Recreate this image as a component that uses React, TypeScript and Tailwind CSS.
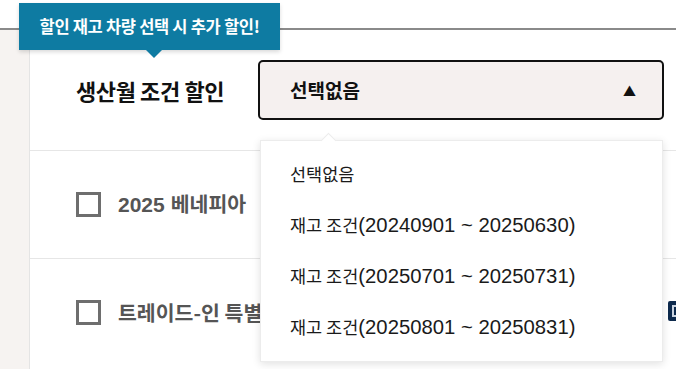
import React from "react";

const font = { fontFamily: '"Noto Sans CJK KR", "Noto Sans", sans-serif' };
const latin = { fontFamily: '"Liberation Sans", "Noto Sans CJK KR", sans-serif' };

const items: [string, string][] = [
  ["선택없음", ""],
  ["재고 조건", "(20240901 ~ 20250630)"],
  ["재고 조건", "(20250701 ~ 20250731)"],
  ["재고 조건", "(20250801 ~ 20250831)"],
];

export default function App() {
  return (
    <div
      className="relative w-[676px] h-[369px] overflow-hidden bg-white flex flex-col"
      style={font}
    >
      <div className="h-[28px] shrink-0 bg-white" />
      <div className="h-[2px] shrink-0 bg-[#8a8a8a]" />
      <div className="flex flex-1">
        <div className="w-[30px] shrink-0 bg-[#f6f3f1] border-r border-[#e4e4e4]" />
        <div className="flex-1 flex flex-col">
          <div className="h-[121px] shrink-0 flex items-center pl-[46px] border-b border-[#e6e6e6]">
            <span className="text-[22px] font-bold text-[#111] tracking-[-0.4px] w-[182px]">
              생산월 조건 할인
            </span>
            <div className="w-[406px] h-[60px] rounded-[5px] border-2 border-[#111] bg-[#f5f0ef] flex items-center justify-between pl-[30px] pr-[26px]">
              <span className="text-[19px] font-bold text-[#111]">선택없음</span>
              <span className="text-[13px] text-[#111] leading-none">▲</span>
            </div>
          </div>
          <div className="h-[108px] shrink-0 flex items-center pl-[46px] border-b border-[#e6e6e6]">
            <div className="w-[25px] h-[25px] border-[3px] border-[#6e6e6e]" />
            <div className="ml-[17px] whitespace-nowrap flex items-baseline gap-[6px] font-bold text-[#555]">
              <span className="text-[21px]" style={latin}>2025</span>
              <span className="text-[20.5px]">베네피아</span>
            </div>
          </div>
          <div className="h-[116px] shrink-0 flex items-center pl-[46px] pb-[10px] relative">
            <div className="w-[25px] h-[25px] border-[3px] border-[#6e6e6e]" />
            <div className="ml-[17px] whitespace-nowrap text-[20.5px] font-bold text-[#555]">
              트레이드-인 특별
            </div>
            <div className="absolute left-[638px] top-[42px] w-[20px] h-[20px] bg-[#0d2a4d] rounded-[2px] flex items-center justify-center">
              <div className="w-[12px] h-[12px] bg-[#0d2a4d] border-2 border-[#c9d3e0]" />
            </div>
          </div>
        </div>
      </div>

      {/* tooltip */}
      <div className="absolute left-[19px] top-[3px] w-[261px] h-[47px] bg-[#0e7ba2] shadow-[0_2px_4px_rgba(0,0,0,0.15)] flex items-center justify-center">
        <span className="text-[16.5px] font-bold text-white tracking-[-0.3px]">
          할인 재고 차량 선택 시 추가 할인!
        </span>
        <div className="absolute left-[127px] -bottom-[8px] w-0 h-0 border-l-[8px] border-r-[8px] border-t-[8px] border-l-transparent border-r-transparent border-t-[#0e7ba2]" />
      </div>

      {/* dropdown */}
      <div className="absolute left-[260px] top-[140px] w-[403px] h-[222px] bg-white border border-[#ececec] shadow-[0_2px_8px_rgba(0,0,0,0.12)] pt-[8px]">
        <div className="absolute left-[62px] -top-[6px] w-[11px] h-[11px] rotate-45 bg-white border-l border-t border-[#ececec]" />
        {items.map(([k, l], i) => (
          <div
            key={i}
            className="relative h-[51px] flex items-center pl-[29px] text-[#1a1a1a]"
          >
            <div className="flex items-baseline">
              <span className="text-[17.5px]">{k}</span>
              {l && (
                <span className="text-[20.3px]" style={latin}>
                  {l}
                </span>
              )}
            </div>
          </div>
        ))}
      </div>
    </div>
  );
}
